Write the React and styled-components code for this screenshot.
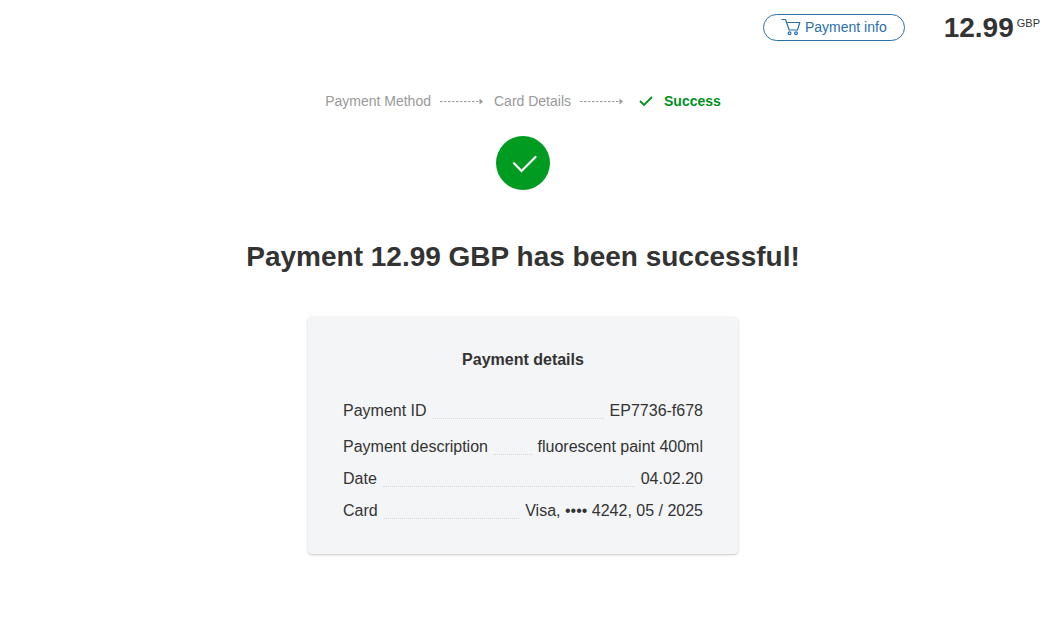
import styled, { createGlobalStyle } from 'styled-components'

const GlobalStyle = createGlobalStyle`
  * {
    box-sizing: border-box;
  }
  body {
    margin: 0;
    background: #fff;
    color: #333;
    font-family: "Liberation Sans", Arial, sans-serif;
    font-size: 16px;
    line-height: 24px;
  }
`

const Page = styled.div`
  padding-right: 3px;
`
const Header = styled.header`
  display: flex;
  justify-content: flex-end;
  align-items: center;
  gap: 39px;
  padding: 14px 6px 0 16px;
`
const InfoButton = styled.button`
  display: flex;
  align-items: center;
  gap: 4px;
  height: 27px;
  padding: 0 17px 1px;
  border: 1px solid #2870a8;
  border-radius: 14px;
  background: #fff;
  color: #2870a8;
  font-family: inherit;
  font-size: 14px;
  cursor: pointer;
`
const Total = styled.div`
  display: flex;
  align-items: flex-start;
  gap: 3px;
  font-size: 28px;
  font-weight: 700;
  line-height: 27px;
`
const Currency = styled.span`
  font-size: 11px;
  font-weight: 400;
  line-height: 18px;
`
const Main = styled.main`
  display: flex;
  flex-direction: column;
  align-items: center;
  padding: 48px 16px;
`
const Steps = styled.ol`
  display: flex;
  align-items: center;
  margin: 0;
  padding: 0;
  list-style: none;
  font-size: 14px;
`
const Step = styled.li`
  display: flex;
  align-items: center;
  gap: ${props => (props.$done ? '11px' : '9px')};
  margin-right: ${props => (props.$done ? '0' : '11px')};
  margin-left: ${props => (props.$done ? '5px' : '0')};
  color: ${props => (props.$done ? '#00911f' : '#999')};
  font-weight: ${props => (props.$done ? 700 : 400)};
  svg {
    display: block;
  }
`
const SuccessBadge = styled.div`
  display: flex;
  align-items: center;
  justify-content: center;
  width: 54px;
  height: 54px;
  margin-top: 23px;
  border-radius: 50%;
  background: #009c22;
  color: #fff;
  svg {
    margin: 2px 0 0 3px;
  }
`
const Title = styled.h1`
  margin: 49px 0 0;
  font-size: 28px;
  line-height: 36px;
  text-align: center;
`
const Card = styled.section`
  width: 100%;
  max-width: 430px;
  margin-top: 42px;
  padding: 31px 35px 31px;
  border-radius: 4px;
  background: #f3f5f7;
  box-shadow: 0 1px 2px rgba(0, 0, 0, 0.2), 0 0 6px rgba(0, 0, 0, 0.04);
`
const CardTitle = styled.h2`
  margin: 0 0 27px;
  font-size: 16px;
  line-height: 24px;
  text-align: center;
`
const Details = styled.dl`
  display: flex;
  flex-direction: column;
  gap: 8px;
  margin: 0;
`
const Row = styled.div`
  display: flex;
  gap: 6px;
  &:first-child {
    margin-bottom: 4px;
  }
`
const Label = styled.dt``
const Leader = styled.span`
  flex: 1;
  height: 20px;
  border-bottom: 1px dotted #d4d6d8;
`
const Value = styled.dd`
  margin: 0;
`

const CartIcon = () => (
  <svg width="20" height="18" viewBox="0 0 20 18" fill="none" stroke="currentColor" strokeWidth="1.2" aria-hidden="true">
    <path d="M0.5 1.5H4.5L8.2 12H16.5L18.8 4.5H6" strokeLinejoin="round" />
    <circle cx="8.5" cy="15.3" r="1.4" />
    <circle cx="15" cy="15.3" r="1.4" />
  </svg>
)

const Arrow = () => (
  <svg width="43" height="7" viewBox="0 0 43 7" aria-hidden="true">
    <path d="M0 3.5H39" stroke="#999" strokeDasharray="2.5 1.5" />
    <path d="M39.5 0.5L43 3.5L39.5 6.5Z" fill="#999" />
  </svg>
)

const CheckSmall = () => (
  <svg width="14" height="10" viewBox="0 0 14 10" fill="none" stroke="currentColor" strokeWidth="1.8" aria-hidden="true">
    <path d="M1 5L5 9L13 1" />
  </svg>
)

const CheckLarge = () => (
  <svg width="25" height="18" viewBox="0 0 25 18" fill="none" stroke="currentColor" strokeWidth="2.2" strokeLinecap="round" aria-hidden="true">
    <path d="M2 8.2L9.5 16L23.5 2" />
  </svg>
)

const details = [
  { label: 'Payment ID', value: 'EP7736-f678' },
  { label: 'Payment description', value: 'fluorescent paint 400ml' },
  { label: 'Date', value: '04.02.20' },
  { label: 'Card', value: 'Visa, •••• 4242, 05 / 2025' },
]

const App = () => {
  return (
    <Page>
      <GlobalStyle />
      <Header>
        <InfoButton type="button">
          <CartIcon />
          Payment info
        </InfoButton>
        <Total>
          12.99
          <Currency>GBP</Currency>
        </Total>
      </Header>
      <Main>
        <Steps>
          <Step>
            Payment Method
            <Arrow />
          </Step>
          <Step>
            Card Details
            <Arrow />
          </Step>
          <Step $done>
            <CheckSmall />
            Success
          </Step>
        </Steps>
        <SuccessBadge>
          <CheckLarge />
        </SuccessBadge>
        <Title>Payment 12.99 GBP has been successful!</Title>
        <Card>
          <CardTitle>Payment details</CardTitle>
          <Details>
            {details.map(item => (
              <Row key={item.label}>
                <Label>{item.label}</Label>
                <Leader />
                <Value>{item.value}</Value>
              </Row>
            ))}
          </Details>
        </Card>
      </Main>
    </Page>
  )
}

export default App
